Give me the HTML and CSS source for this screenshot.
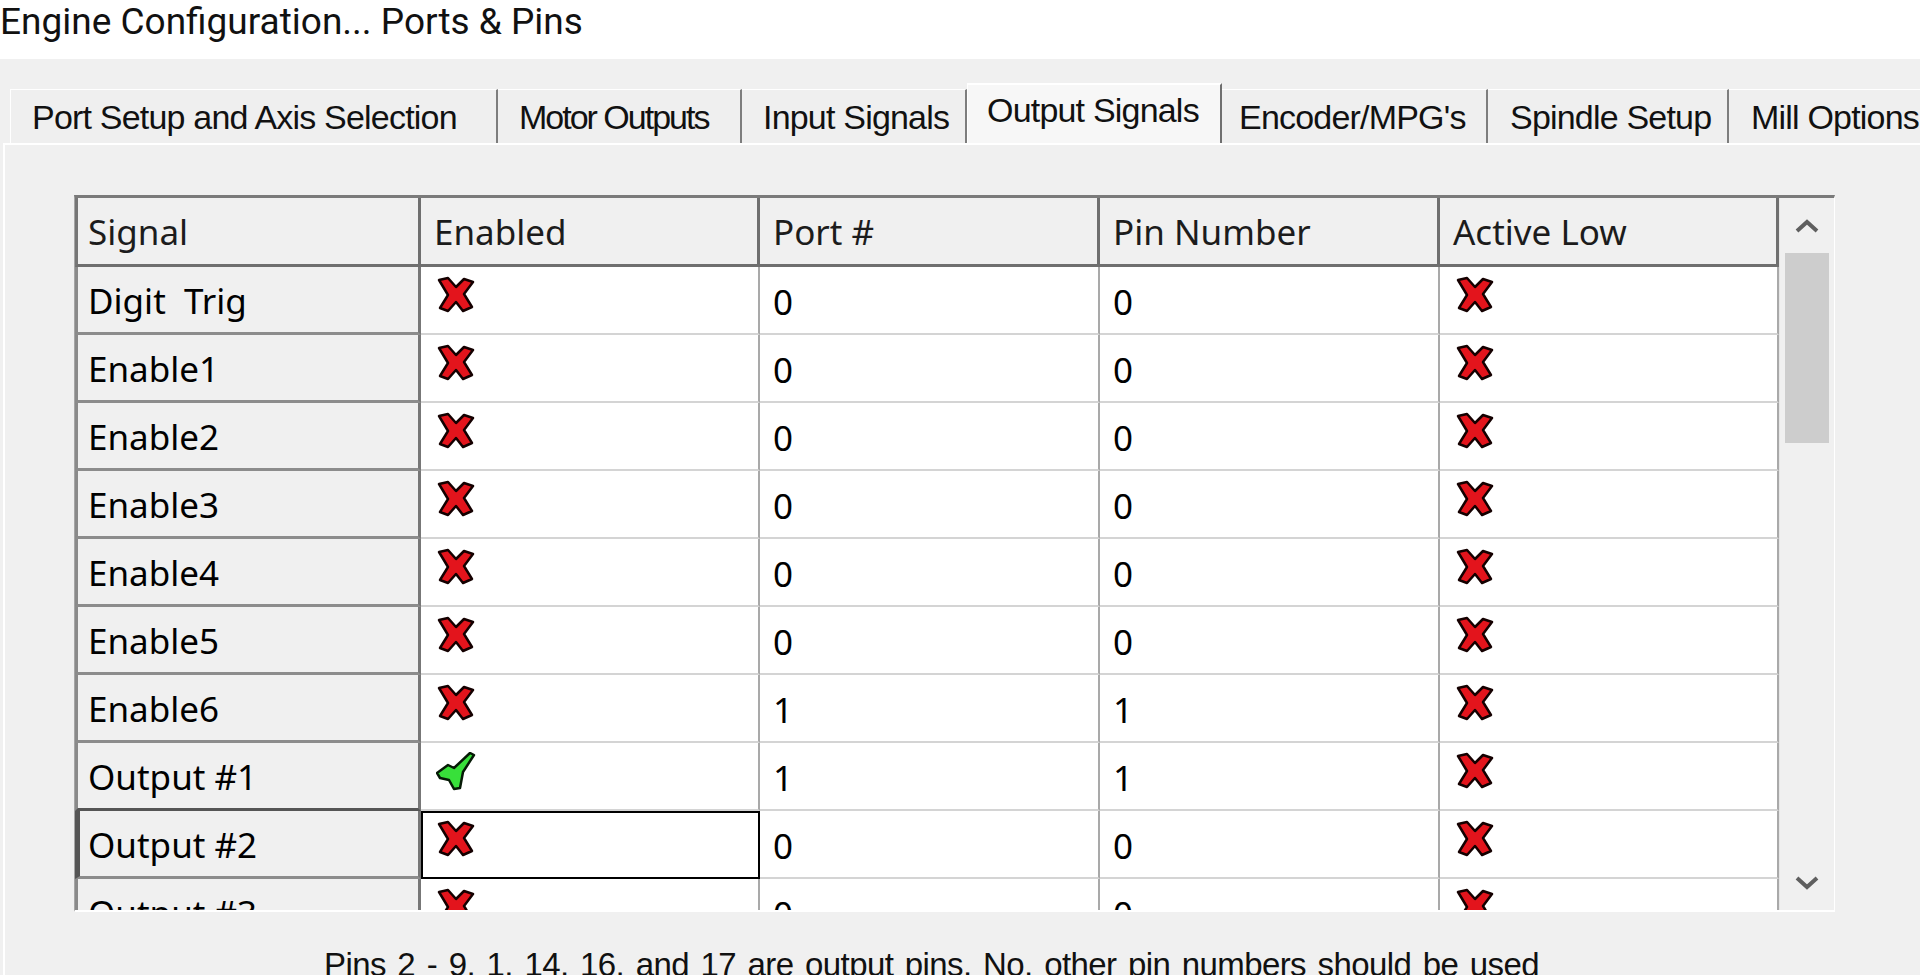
FILE: index.html
```html
<!DOCTYPE html>
<html lang="en">
<head>
  <meta charset="UTF-8">
  <title>Engine Configuration... Ports &amp; Pins</title>
  <link rel="stylesheet" href="styles.css">
</head>
<body>
  <svg class="defs" width="0" height="0">
    <symbol id="icon-x" viewBox="0 0 40 38">
      <path d="M3 4 L12 2 L20 11 L28 3 L37 6 L28 18 L36 31 L27 35 L20 26 L12 35 L4 32 L12 19 Z" fill="#e3141c" stroke="#140000" stroke-width="2.5" stroke-linejoin="round"/>
    </symbol>
    <symbol id="icon-check" viewBox="0 0 42 40">
      <path d="M1 21 L12 13 L18 16 L34 1 L38 3 L27 20 L24 36 L18 37 L13 28 L4 26 Z" fill="#38e03a" stroke="#061a06" stroke-width="2.5" stroke-linejoin="round"/>
    </symbol>
  </svg>

  <div class="titlebar">Engine Configuration... Ports &amp; Pins</div>

  <div class="tabbar">
    <div class="tab t-port">Port Setup and Axis Selection</div>
    <div class="tab t-motor">Motor Outputs</div>
    <div class="tab t-input">Input Signals</div>
    <div class="tab t-output active">Output Signals</div>
    <div class="tab t-encoder">Encoder/MPG's</div>
    <div class="tab t-spindle">Spindle Setup</div>
    <div class="tab t-mill">Mill Options</div>
  </div>

  <div class="panel">
    <div class="grid">
      <div class="table">
        <div class="hdr corner">Signal</div>
        <div class="hdr">Enabled</div>
        <div class="hdr">Port #</div>
        <div class="hdr">Pin Number</div>
        <div class="hdr">Active Low</div>

        <div class="rowhead">Digit&nbsp; Trig</div>
        <div class="cell icon"><svg><use href="#icon-x"/></svg></div>
        <div class="cell">0</div>
        <div class="cell">0</div>
        <div class="cell icon"><svg><use href="#icon-x"/></svg></div>

        <div class="rowhead">Enable1</div>
        <div class="cell icon"><svg><use href="#icon-x"/></svg></div>
        <div class="cell">0</div>
        <div class="cell">0</div>
        <div class="cell icon"><svg><use href="#icon-x"/></svg></div>

        <div class="rowhead">Enable2</div>
        <div class="cell icon"><svg><use href="#icon-x"/></svg></div>
        <div class="cell">0</div>
        <div class="cell">0</div>
        <div class="cell icon"><svg><use href="#icon-x"/></svg></div>

        <div class="rowhead">Enable3</div>
        <div class="cell icon"><svg><use href="#icon-x"/></svg></div>
        <div class="cell">0</div>
        <div class="cell">0</div>
        <div class="cell icon"><svg><use href="#icon-x"/></svg></div>

        <div class="rowhead">Enable4</div>
        <div class="cell icon"><svg><use href="#icon-x"/></svg></div>
        <div class="cell">0</div>
        <div class="cell">0</div>
        <div class="cell icon"><svg><use href="#icon-x"/></svg></div>

        <div class="rowhead">Enable5</div>
        <div class="cell icon"><svg><use href="#icon-x"/></svg></div>
        <div class="cell">0</div>
        <div class="cell">0</div>
        <div class="cell icon"><svg><use href="#icon-x"/></svg></div>

        <div class="rowhead">Enable6</div>
        <div class="cell icon"><svg><use href="#icon-x"/></svg></div>
        <div class="cell">1</div>
        <div class="cell">1</div>
        <div class="cell icon"><svg><use href="#icon-x"/></svg></div>

        <div class="rowhead prev">Output #1</div>
        <div class="cell icon"><svg class="check"><use href="#icon-check"/></svg></div>
        <div class="cell">1</div>
        <div class="cell">1</div>
        <div class="cell icon"><svg><use href="#icon-x"/></svg></div>

        <div class="rowhead current">Output #2</div>
        <div class="cell icon focused"><svg><use href="#icon-x"/></svg></div>
        <div class="cell">0</div>
        <div class="cell">0</div>
        <div class="cell icon"><svg><use href="#icon-x"/></svg></div>

        <div class="rowhead">Output #3</div>
        <div class="cell icon"><svg><use href="#icon-x"/></svg></div>
        <div class="cell">0</div>
        <div class="cell">0</div>
        <div class="cell icon"><svg><use href="#icon-x"/></svg></div>
      </div>

      <div class="scrollbar">
        <div class="arrow">
          <svg width="24" height="14" viewBox="0 0 24 14"><path d="M2 12 L12 3 L22 12" fill="none" stroke="#5f5f5f" stroke-width="4"/></svg>
        </div>
        <div class="thumb"></div>
        <div class="track"></div>
        <div class="arrow">
          <svg width="24" height="14" viewBox="0 0 24 14"><path d="M2 2 L12 11 L22 2" fill="none" stroke="#5f5f5f" stroke-width="4"/></svg>
        </div>
      </div>
    </div>

    <p class="note">Pins 2 - 9, 1, 14, 16, and 17 are output pins. No, other pin numbers should be used</p>
  </div>
</body>
</html>
```

FILE: styles.css
```css
/* General Styles */
body {
  margin: 0;
  background: #f0f0f0;
  color: #000;
  font-family: 'Noto Sans', 'Open Sans', sans-serif;
  height: 975px;
  overflow: hidden;
}

.defs {
  position: absolute;
}

.titlebar {
  height: 59px;
  background: #fff;
  font-family: Roboto, 'Noto Sans', sans-serif;
  font-size: 37px;
  line-height: 44px;
  color: #111;
  white-space: nowrap;
}

/* Tabs */
.tabbar {
  display: flex;
  align-items: flex-end;
  height: 61px;
  margin-top: 23px;
  padding-left: 10px;
  font-family: 'Liberation Sans', Arial, sans-serif;
  font-size: 34px;
  letter-spacing: -0.8px;
  white-space: nowrap;
  overflow: hidden;
}

.tab {
  flex: none;
  height: 54px;
  line-height: 50px;
  padding: 2px 0 0 21px;
  color: #111;
  background: #efefef;
  border-top: 1px solid #fff;
  border-right: 2px solid #7d7d7d;
  box-sizing: border-box;
}

.t-port {
  width: 488px;
  border-left: 1px solid #fff;
}

.t-motor {
  width: 244px;
  letter-spacing: -2px;
}

.t-input {
  width: 225px;
}

.t-output {
  width: 255px;
}

.t-encoder {
  width: 266px;
  padding-left: 17px;
}

.t-spindle {
  width: 241px;
  padding-left: 22px;
}

.t-mill {
  width: 230px;
  padding-left: 22px;
}

.tab.active {
  height: 62px;
  line-height: 50px;
  padding: 0 0 0 19px;
  margin-bottom: -2px;
  background: #f7f7f7;
  border-top: 2px solid #fff;
  border-left: 1px solid #fff;
  border-right: 2px solid #6f6f6f;
  position: relative;
  z-index: 1;
}

.panel {
  border-top: 2px solid #fff;
  border-left: 2px solid #fff;
  margin-left: 3px;
  padding: 50px 0 0 69px;
}

/* Grid */
.grid {
  display: flex;
  width: 1761px;
  height: 717px;
  box-sizing: border-box;
  border-top: 3px solid #7a7a7a;
  border-left: 1px solid #a6a6a6;
  border-right: 1px solid #fff;
  border-bottom: 2px solid #fff;
  overflow: hidden;
}

.table {
  display: grid;
  grid-template-columns: 346px 339px 340px 340px 339px;
  grid-auto-rows: 68px;
  grid-template-rows: 69px;
  align-content: start;
  font-size: 35px;
  background: #fff;
}

.hdr,
.rowhead,
.cell {
  display: flex;
  align-items: center;
  box-sizing: border-box;
  padding-left: 13px;
  white-space: nowrap;
}

.hdr {
  background: #f0f0f0;
  color: #1c1c1c;
  border-right: 3px solid #6f6f6f;
  border-bottom: 3px solid #6f6f6f;
}

.hdr.corner {
  border-left: 3px solid #767676;
  padding-left: 10px;
}

.rowhead {
  background: #f0f0f0;
  border-left: 3px solid #8a8a8a;
  border-right: 3px solid #777;
  border-bottom: 3px solid #8c8c8c;
  padding-left: 10px;
  padding-top: 2px;
}

.rowhead.prev {
  border-bottom-color: #555;
}

.rowhead.current {
  border-left: 5px solid #555;
  padding-left: 8px;
}

.cell {
  background: #fff;
  border-right: 2px solid #a9a9a9;
  border-bottom: 2px solid #d4d4d4;
  padding-top: 2px;
}

.cell.icon {
  align-items: flex-start;
  padding-top: 9px;
  padding-left: 15px;
}

.cell svg {
  width: 40px;
  height: 38px;
}

.cell svg.check {
  width: 42px;
  height: 40px;
}

.cell.focused {
  border: 2px solid #000;
  padding-left: 13px;
  padding-top: 7px;
}

/* Scrollbar */
.scrollbar {
  display: flex;
  flex-direction: column;
  width: 55px;
  background: #f0f0f0;
  border-left: 1px solid #e6e6e6;
}

.arrow {
  height: 55px;
  display: flex;
  align-items: center;
  justify-content: center;
}

.thumb {
  height: 190px;
  margin: 0 5px;
  background: #cdcdcd;
}

.track {
  flex: 1;
}

.note {
  margin: 34px 0 0 250px;
  font-family: 'Liberation Sans', Arial, sans-serif;
  font-size: 33px;
  line-height: 38px;
  letter-spacing: -0.6px;
  word-spacing: 3px;
  color: #111;
  white-space: nowrap;
}
```
